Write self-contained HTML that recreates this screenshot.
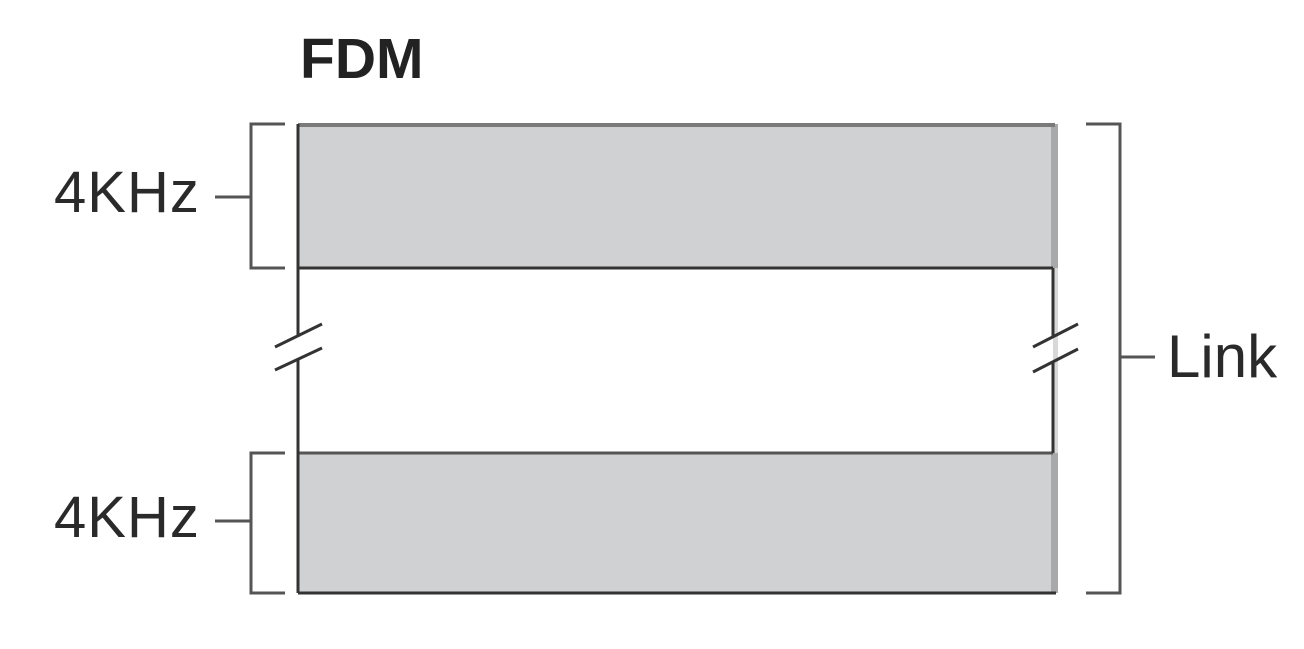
<!DOCTYPE html>
<html><head><style>
body{margin:0;width:1304px;height:644px;background:#fff;overflow:hidden;font-family:"Liberation Sans",sans-serif;}
</style></head><body>
<svg width="1304" height="644" viewBox="0 0 1304 644" xmlns="http://www.w3.org/2000/svg">
<rect x="298" y="124" width="755" height="144" fill="#d0d1d3"/>
<rect x="298" y="453" width="755" height="140" fill="#d0d1d3"/>
<rect x="1051" y="124" width="7" height="144" fill="#a8a9ab"/>
<rect x="1051" y="453" width="7" height="140" fill="#a8a9ab"/>
<rect x="1053" y="268" width="5" height="185" fill="#d8d8d8"/>
<g stroke="#333" stroke-width="3" fill="none">
<line x1="298" y1="125" x2="1055" y2="125" stroke="#7a7a7a" stroke-width="4"/>
<line x1="298" y1="268" x2="1053" y2="268"/>
<line x1="298" y1="453" x2="1053" y2="453" stroke="#555"/>
<line x1="298" y1="593" x2="1056" y2="593"/>
<path d="M298 124V337M298 360V593"/>
<path d="M1053 268V337M1053 362V453"/>
<path d="M275 347L322 324M275 370L322 348"/>
<path d="M1033 347L1078 324M1033 372L1078 349"/>
</g>
<g stroke="#555" stroke-width="3" fill="none">
<path d="M285 124H251V268H285M215 197H251"/>
<path d="M285 453H251V593H285M215 521H251"/>
<path d="M1086 124H1120V593H1086M1120 357H1155"/>
</g>
<text x="300" y="78" font-size="57" font-weight="bold" fill="#222">FDM</text>
<text x="54" y="212" font-size="58" fill="#2a2a2a" letter-spacing="1">4KHz</text>
<text x="54" y="537" font-size="58" fill="#2a2a2a" letter-spacing="1">4KHz</text>
<text x="1167" y="377" font-size="60" fill="#2a2a2a">Link</text>
</svg>
</body></html>
